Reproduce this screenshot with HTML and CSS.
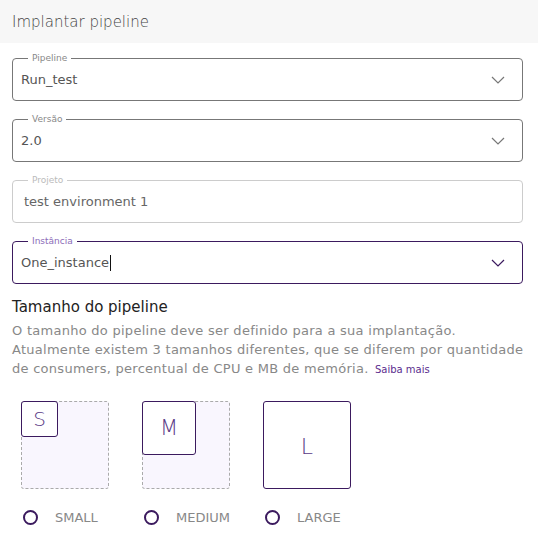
FILE: index.html
```html
<!DOCTYPE html>
<html lang="pt">
<head>
<meta charset="utf-8">
<title>Implantar pipeline</title>
<link rel="stylesheet" href="styles.css">
</head>
<body>
<header class="header">Implantar pipeline</header>
<main class="content">
  <div class="field">
    <span class="legend">Pipeline</span>
    <span class="value">Run_test</span>
    <svg class="chev" width="14" height="8" viewBox="0 0 14 8"><path d="M1 1l6 6 6-6" fill="none" stroke="#777" stroke-width="1.2"/></svg>
  </div>
  <div class="field">
    <span class="legend">Versão</span>
    <span class="value">2.0</span>
    <svg class="chev" width="14" height="8" viewBox="0 0 14 8"><path d="M1 1l6 6 6-6" fill="none" stroke="#777" stroke-width="1.2"/></svg>
  </div>
  <div class="field field-disabled">
    <span class="legend">Projeto</span>
    <span class="value">test environment 1</span>
  </div>
  <div class="field field-active">
    <span class="legend">Instância</span>
    <span class="value">One_instance<span class="caret"></span></span>
    <svg class="chev" width="14" height="8" viewBox="0 0 14 8"><path d="M1 1l6 6 6-6" fill="none" stroke="#3b1a5e" stroke-width="1.2"/></svg>
  </div>

  <h2 class="section-title">Tamanho do pipeline</h2>
  <p class="desc">O tamanho do pipeline deve ser definido para a sua implantação.<br>Atualmente existem 3 tamanhos diferentes, que se diferem por quantidade<br>de consumers, percentual de CPU e MB de memória. <a class="link" href="#">Saiba mais</a></p>

  <div class="sizes">
    <div class="size">
      <div class="frame dashed"><div class="tile tile-s">S</div></div>
      <label class="option"><span class="radio"></span><span class="opt-label">SMALL</span></label>
    </div>
    <div class="size">
      <div class="frame dashed"><div class="tile tile-m">M</div></div>
      <label class="option"><span class="radio"></span><span class="opt-label">MEDIUM</span></label>
    </div>
    <div class="size">
      <div class="frame"><div class="tile tile-l">L</div></div>
      <label class="option"><span class="radio"></span><span class="opt-label">LARGE</span></label>
    </div>
  </div>
</main>
</body>
</html>
```

FILE: styles.css
```css
* { box-sizing: border-box; }
html, body { margin: 0; padding: 0; background: #fff; }
body {
  font-family: "DejaVu Sans", "Open Sans", sans-serif;
  color: #444;
  width: 538px;
}
.header {
  height: 43px;
  background: #f7f7f7;
  padding: 0 12px;
  display: flex;
  align-items: center;
  font-size: 15px;
  color: #444;
  font-weight: 300;
}
.content {
  padding: 15px 15px 0 12px;
}
.field {
  position: relative;
  height: 43px;
  border: 1px solid #777;
  border-radius: 4px;
  display: flex;
  align-items: center;
  justify-content: space-between;
  padding: 0 17px 0 8px;
  margin-bottom: 18px;
}
.field-active { margin-bottom: 13px; }
.legend {
  position: absolute;
  top: -7px;
  left: 15px;
  background: #fff;
  padding: 0 4px;
  font-size: 9px;
  line-height: 12px;
  color: #888;
}
.value {
  font-size: 13px;
  color: #555;
  display: flex;
  align-items: center;
}
.chev { display: block; }
.field-disabled { border-color: #ccc; padding-left: 11px; }
.field-disabled .legend { color: #bbb; }
.field-disabled .value { color: #666; }
.field-active { border-color: #3b1a5e; }
.field-active .legend { color: #8b6cb8; }
.caret {
  display: inline-block;
  width: 1px;
  height: 16px;
  background: #111;
  margin-left: 1px;
}
.section-title {
  margin: 0;
  font-size: 15px;
  font-weight: 400;
  color: #222;
  line-height: 20px;
}
.desc {
  margin: 4px 0 0;
  font-size: 13px;
  letter-spacing: 0.27px;
  line-height: 19px;
  color: #888;
  white-space: nowrap;
}
.link {
  color: #5b2d8e;
  font-size: 10px;
  letter-spacing: 0;
  text-decoration: none;
  margin-left: 2px;
}
.sizes {
  display: flex;
  gap: 33px;
  padding-left: 9px;
  margin-top: 22px;
}
.size {
  width: 88px;
  display: flex;
  flex-direction: column;
}
.frame {
  width: 88px;
  height: 88px;
  border: 1px solid #3b1a5e;
  border-radius: 3px;
  background: #fff;
  display: flex;
}
.frame.dashed {
  border: 1px dashed #aaa;
  background: #f9f6fe;
}
.tile {
  border: 1px solid #3b1a5e;
  border-radius: 3px;
  background: #fff;
  color: #5a3a86;
  display: flex;
  align-items: center;
  justify-content: center;
  font-weight: 300;
  margin: -1px;
}
.tile-s { width: 37px; height: 36px; font-size: 20px; }
.tile-m { width: 54px; height: 54px; font-size: 21px; }
.tile-l { width: 88px; height: 88px; font-size: 22px; border: none; margin: 0; background: transparent; }
.option {
  display: flex;
  align-items: center;
  margin-top: 21px;
  padding-left: 2px;
}
.radio {
  width: 15px;
  height: 15px;
  border: 2px solid #3b1a5e;
  border-radius: 50%;
  flex: none;
}
.opt-label {
  margin-left: 17px;
  font-size: 13px;
  color: #888;
}
```
